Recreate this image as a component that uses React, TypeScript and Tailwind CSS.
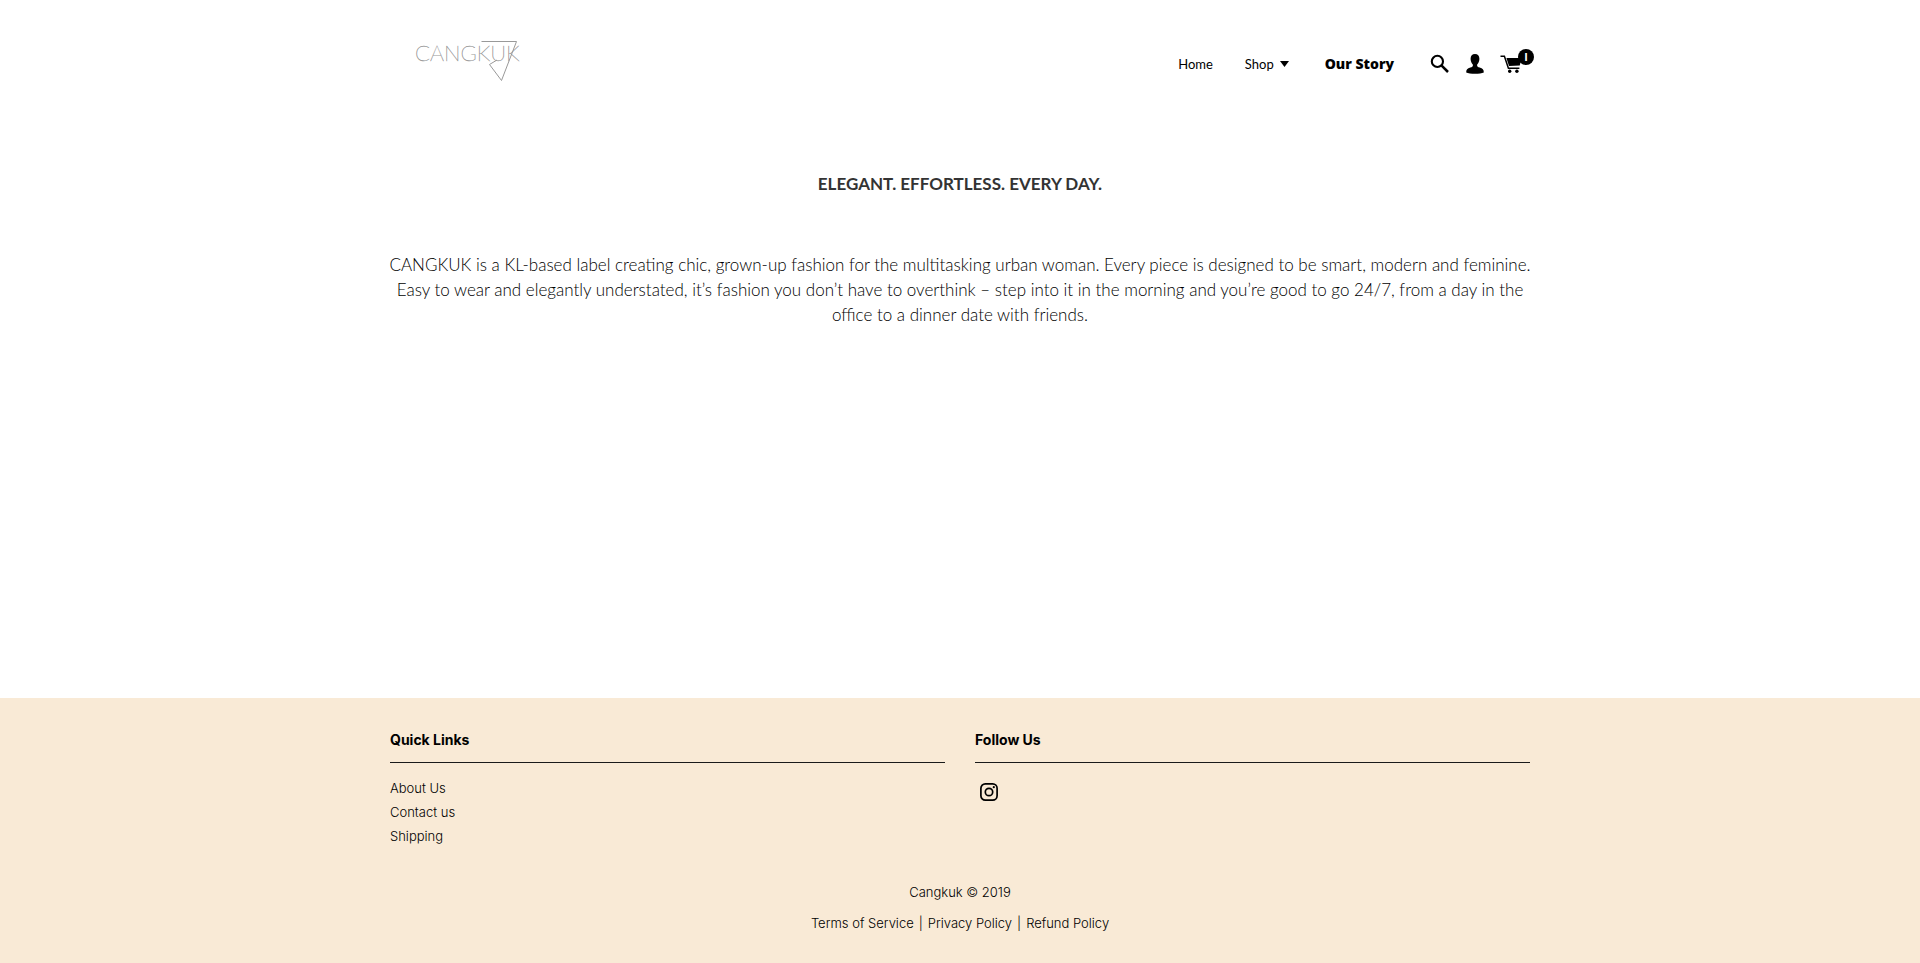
import type { ReactNode } from "react";

const quickLinks = ["About Us", "Contact us", "Shipping"];
const policies = ["Terms of Service", "Privacy Policy", "Refund Policy"];

function Logo() {
  return (
    <a href="#" aria-label="Cangkuk" className="ml-6 block">
      <svg width="112" height="46" viewBox="0 0 112 46" fill="none" className="overflow-visible">
        <text x="1" y="25" fill="#999" stroke="#999" strokeWidth="0.4" className="font-['Lato'] text-[22px] font-thin">
          CANGKUK
        </text>
        <path d="M67.5 5.5H102.5L87.5 44.5L75.5 28.5L83 24" stroke="#999" strokeWidth="1" />
      </svg>
    </a>
  );
}

function SearchIcon() {
  return (
    <svg width="20" height="20" viewBox="0 0 20 20" fill="none" stroke="#000">
      <circle cx="7.4" cy="7.4" r="5.6" strokeWidth="2.1" />
      <path d="M11.4 11.4L18 18" strokeWidth="2.5" />
    </svg>
  );
}

function UserIcon() {
  return (
    <svg width="18" height="20" viewBox="0 0 18 20" fill="#000">
      <path d="M9 0C6.1 0 4.5 2 4.6 5C4.7 7.6 5.7 9.3 6.8 10.4C7.2 12.4 6.5 13 4.3 13.6C1.3 14.5.2 15.7.2 18.4C3.5 20.2 14.5 20.2 17.8 18.4C17.8 15.7 16.7 14.5 13.7 13.6C11.5 13 10.8 12.4 11.2 10.4C12.3 9.3 13.3 7.6 13.4 5C13.5 2 11.9 0 9 0Z" />
    </svg>
  );
}

function CartIcon() {
  return (
    <svg width="22" height="18" viewBox="0 0 22 18" fill="none">
      <path d="M.5 1.2H4.4L8.4 13.2H19.4" stroke="#000" strokeWidth="1.5" />
      <path d="M6.4 3H21.4L19.8 10.6L9 11Z" fill="#000" />
      <circle cx="9.7" cy="16.2" r="1.7" fill="#000" />
      <circle cx="16.9" cy="16.2" r="1.7" fill="#000" />
    </svg>
  );
}

function InstagramIcon() {
  return (
    <svg width="18" height="18" viewBox="0 0 18 18" fill="none" stroke="#000">
      <rect x="0.9" y="0.9" width="16.2" height="16.2" rx="4.4" strokeWidth="1.7" />
      <circle cx="9" cy="9" r="3.7" strokeWidth="1.7" />
      <circle cx="13.8" cy="4.2" r="1.1" fill="#000" stroke="none" />
    </svg>
  );
}

function FooterColumn({ title, children }: { title: string; children: ReactNode }) {
  return (
    <section>
      <h2 className="border-b border-[#1a1a1a] pb-3 text-sm leading-5 font-bold text-black">{title}</h2>
      <div className="pt-3">{children}</div>
    </section>
  );
}

export default function App() {
  return (
    <div className="flex min-h-screen flex-col bg-white font-['Inter',sans-serif] text-[#333]">
      <header className="mx-auto flex w-full max-w-[1140px] items-center justify-between pt-9 pb-11">
        <Logo />
        <nav className="mt-2.5 flex items-center font-['Lato',sans-serif] text-[13px] leading-5 text-black">
          <a href="#" className="mr-8">Home</a>
          <button type="button" className="mr-9 flex items-center gap-1.5">
            Shop
            <svg width="9" height="6" viewBox="0 0 9 6">
              <path d="M0 0H9L4.5 6Z" />
            </svg>
          </button>
          <a href="#" className="mr-9 font-['Open_Sans',sans-serif] text-sm leading-5 font-extrabold">Our Story</a>
          <button type="button" aria-label="Search" className="mr-4"><SearchIcon /></button>
          <a href="#" aria-label="Account" className="mr-4"><UserIcon /></a>
          <a href="#" aria-label="Cart" className="relative mr-2">
            <CartIcon />
            <span className="absolute -top-1.5 -right-3 flex size-4 items-center justify-center rounded-full bg-black text-xs font-bold text-white">
              I
            </span>
          </a>
        </nav>
      </header>

      <main className="mx-auto w-full max-w-[1148px] flex-1 text-center font-['Lato',sans-serif]">
        <h1 className="mt-[46px] text-[17px] leading-6 font-bold">ELEGANT. EFFORTLESS. EVERY DAY.</h1>
        <p className="mt-14 text-[17px] leading-[25px] font-light text-black">
          CANGKUK is a KL-based label creating chic, grown-up fashion for the multitasking urban woman. Every piece is
          designed to be smart, modern and feminine. Easy to wear and elegantly understated, it’s fashion you don’t have
          to overthink – step into it in the morning and you’re good to go 24/7, from a day in the office to a dinner
          date with friends.
        </p>
      </main>

      <footer className="bg-[#f9ead6] pt-8 pb-7 text-[13px] text-black">
        <div className="mx-auto w-full max-w-[1140px]">
          <div className="grid grid-cols-2 gap-[30px]">
            <FooterColumn title="Quick Links">
              <ul className="pt-px leading-6 font-light">
                {quickLinks.map((link) => (
                  <li key={link}>
                    <a href="#">{link}</a>
                  </li>
                ))}
              </ul>
            </FooterColumn>
            <FooterColumn title="Follow Us">
              <a href="#" aria-label="Instagram" className="ml-[5px] inline-block pt-2">
                <InstagramIcon />
              </a>
            </FooterColumn>
          </div>
          <div className="mt-8 flex flex-col items-center gap-[7px] leading-6 font-light">
            <p>Cangkuk © 2019</p>
            <p>
              {policies.map((policy, i) => (
                <span key={policy}>
                  {i > 0 && <span className="mx-[5px]">|</span>}
                  <a href="#">{policy}</a>
                </span>
              ))}
            </p>
          </div>
        </div>
      </footer>
    </div>
  );
}
